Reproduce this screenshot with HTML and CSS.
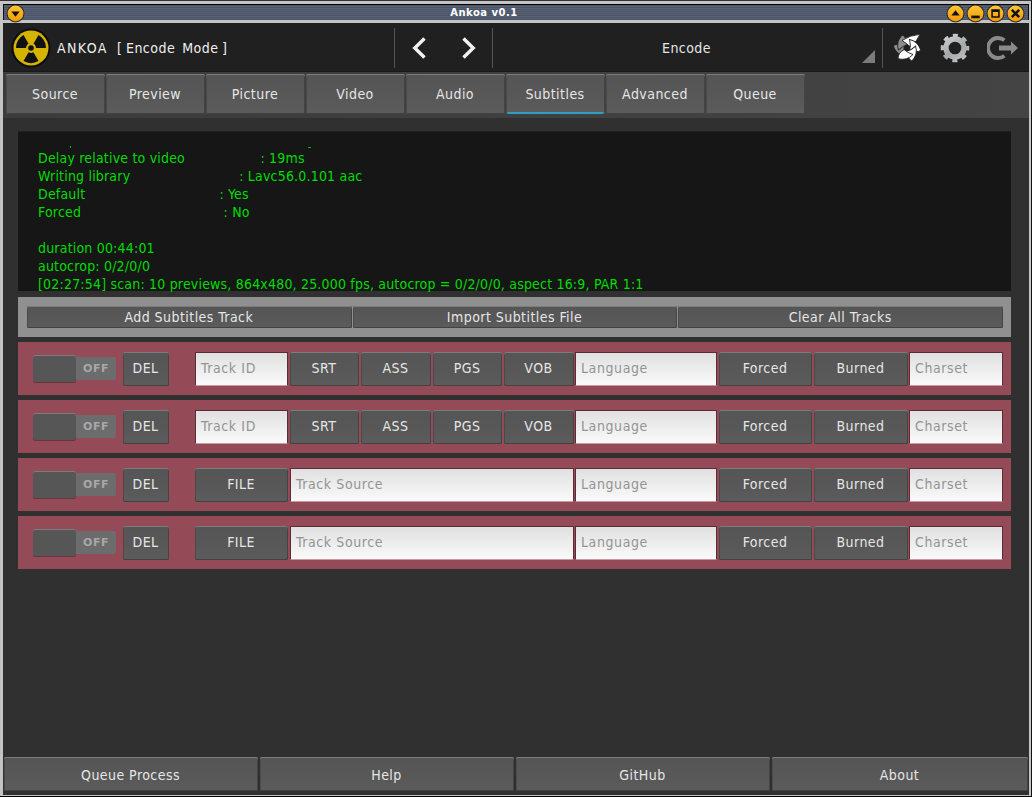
FILE: index.html
```html
<!DOCTYPE html>
<html lang="en">
<head>
<meta charset="utf-8">
<title>Ankoa v0.1</title>
<link rel="stylesheet" href="styles.css">
</head>
<body>
<div class="window">
  <div class="titlebar">
    <svg class="wbtn menu-btn" viewBox="0 0 18 18"><defs><linearGradient id="orb" x1="0" y1="0" x2="0" y2="1"><stop offset="0" stop-color="#ffc533"/><stop offset="1" stop-color="#ef9a08"/></linearGradient></defs><circle cx="9" cy="9" r="8.500" fill="#2a2a2a"/><circle cx="9" cy="9" r="7.500" fill="url(#orb)"/><path d="M5 7h8l-4 5z" fill="#111"/></svg>
    <span class="title">Ankoa v0.1</span>
    <div class="wbtns">
      <svg class="wbtn" viewBox="0 0 18 18"><circle cx="9" cy="9" r="8.500" fill="#2a2a2a"/><circle cx="9" cy="9" r="7.500" fill="url(#orb)"/><path d="M5 11h8L9 6z" fill="#111"/></svg>
      <svg class="wbtn" viewBox="0 0 18 18"><circle cx="9" cy="9" r="8.500" fill="#2a2a2a"/><circle cx="9" cy="9" r="7.500" fill="url(#orb)"/><path d="M5 11h8v2.500H5z" fill="#111"/></svg>
      <svg class="wbtn" viewBox="0 0 18 18"><circle cx="9" cy="9" r="8.500" fill="#2a2a2a"/><circle cx="9" cy="9" r="7.500" fill="url(#orb)"/><path d="M5 5h8v8H5zM6.500 7.500v4h5v-4z" fill="#111" fill-rule="evenodd"/></svg>
      <svg class="wbtn" viewBox="0 0 18 18"><circle cx="9" cy="9" r="8.500" fill="#2a2a2a"/><circle cx="9" cy="9" r="7.500" fill="url(#orb)"/><path d="M5.500 5.500l7 7M12.500 5.500l-7 7" stroke="#111" stroke-width="2.400"/></svg>
    </div>
  </div>
  <div class="app">
    <header class="header">
      <svg class="logo" viewBox="0 0 40 40">
        <circle cx="20" cy="20" r="19.500" fill="#0c0c0c"/>
        <circle cx="20" cy="20" r="17.500" fill="#d4b400"/>
        <path d="M20 20L27.500 33A15 15 0 0 1 12.500 33ZM20 20L5 20A15 15 0 0 1 12.500 7ZM20 20L27.500 7A15 15 0 0 1 35 20Z" fill="#111"/>
        <circle cx="20" cy="20" r="5" fill="#d4b400"/>
        <circle cx="20" cy="20" r="2.800" fill="#111"/>
      </svg>
      <span class="brand"><span class="brand-name">ANKOA</span>  <span class="brand-mode">[ Encode  Mode ]</span></span>
      <div class="nav">
        <svg class="chev" viewBox="0 0 16 24"><path d="M13.500 2.500L3.800 12l9.700 9.500" fill="none" stroke="#f2f2f2" stroke-width="3.400"/></svg>
        <svg class="chev" viewBox="0 0 16 24"><path d="M2.500 2.500L12.200 12l-9.700 9.500" fill="none" stroke="#f2f2f2" stroke-width="3.400"/></svg>
      </div>
      <div class="mode">
        <span>Encode</span>
        <svg class="corner" viewBox="0 0 13 13"><path d="M13 0v13H0z" fill="#7b7b7b"/></svg>
      </div>
      <div class="tools">
        <svg class="tool" viewBox="-16 -16 32 32">
          <defs><path id="blade" d="M-6 -6.500Q0 -13 9 -10.700Q9 -5 3 -1.500Q-1 -5 -6 -6.500Z" stroke="#202020" stroke-width="0.900"/></defs>
          <use href="#blade" fill="#8c8c8c" transform="rotate(240)"/>
          <use href="#blade" fill="#8c8c8c" transform="rotate(300)"/>
          <path d="M-5 -7.500Q3 -13 13 -13.700Q10 -6 3 -1.500Q-1 -5 -5 -7.500Z" fill="#fff" stroke="#202020" stroke-width="0.900"/>
          <use href="#blade" fill="#fff" transform="rotate(60)"/>
          <use href="#blade" fill="#fff" transform="rotate(120)"/>
          <use href="#blade" fill="#fff" transform="rotate(180)"/>
          <circle r="2.800" fill="#202020"/>
        </svg>
        <svg class="tool" viewBox="-16 -16 32 32">
          <defs><linearGradient id="gearfill" gradientUnits="userSpaceOnUse" x1="-8" y1="-14" x2="8" y2="14"><stop offset="0" stop-color="#d0d4d4"/><stop offset="0.55" stop-color="#a4a8a8"/><stop offset="1" stop-color="#c0c4c4"/></linearGradient></defs>
          <circle r="9" fill="none" stroke="url(#gearfill)" stroke-width="5.400"/>
          <circle r="12.500" fill="none" stroke="url(#gearfill)" stroke-width="3.600" stroke-dasharray="5 4.817" stroke-dashoffset="2.500"/>
        </svg>
        <svg class="tool" viewBox="-16 -16 32 32">
          <path d="M1.400 -7.700A10 10 0 1 0 1.400 7.700" fill="none" stroke="#8a8a8a" stroke-width="3.800"/>
          <path d="M-4 -2.400H8V-6.500L15 0 8 6.500V2.400H-4Z" fill="#8a8a8a"/>
        </svg>
      </div>
    </header>
    <nav class="tabs">
      <button class="btn tab">Source</button>
      <button class="btn tab">Preview</button>
      <button class="btn tab">Picture</button>
      <button class="btn tab">Video</button>
      <button class="btn tab">Audio</button>
      <button class="btn tab active">Subtitles</button>
      <button class="btn tab">Advanced</button>
      <button class="btn tab">Queue</button>
    </nav>
    <main class="content">
      <div class="log"><i class="tick tick-a"></i><i class="tick tick-b"></i><pre class="logtext">Delay relative to video                  : 19ms
Writing library                          : Lavc56.0.101 aac
Default                                : Yes
Forced                                  : No

duration 00:44:01
autocrop: 0/2/0/0
[02:27:54] scan: 10 previews, 864x480, 25.000 fps, autocrop = 0/2/0/0, aspect 16:9, PAR 1:1</pre></div>
      <div class="toolbar">
        <button class="btn tool-btn">Add Subtitles Track</button>
        <button class="btn tool-btn">Import Subtitles File</button>
        <button class="btn tool-btn">Clear All Tracks</button>
      </div>
      <div class="row">
        <div class="toggle"><span class="knob"></span><span class="off">OFF</span></div>
        <button class="btn del">DEL</button>
        <div class="field w-id">Track ID</div>
        <button class="btn fmt w1">SRT</button><button class="btn fmt w2">ASS</button><button class="btn fmt w1">PGS</button><button class="btn fmt w2">VOB</button>
        <div class="field w-lang">Language</div>
        <button class="btn fmt w-forced">Forced</button><button class="btn fmt w-burned">Burned</button>
        <div class="field w-char">Charset</div>
      </div>
      <div class="row">
        <div class="toggle"><span class="knob"></span><span class="off">OFF</span></div>
        <button class="btn del">DEL</button>
        <div class="field w-id">Track ID</div>
        <button class="btn fmt w1">SRT</button><button class="btn fmt w2">ASS</button><button class="btn fmt w1">PGS</button><button class="btn fmt w2">VOB</button>
        <div class="field w-lang">Language</div>
        <button class="btn fmt w-forced">Forced</button><button class="btn fmt w-burned">Burned</button>
        <div class="field w-char">Charset</div>
      </div>
      <div class="row">
        <div class="toggle"><span class="knob"></span><span class="off">OFF</span></div>
        <button class="btn del">DEL</button>
        <button class="btn file">FILE</button>
        <div class="field w-src">Track Source</div>
        <div class="field w-lang">Language</div>
        <button class="btn fmt w-forced">Forced</button><button class="btn fmt w-burned">Burned</button>
        <div class="field w-char">Charset</div>
      </div>
      <div class="row">
        <div class="toggle"><span class="knob"></span><span class="off">OFF</span></div>
        <button class="btn del">DEL</button>
        <button class="btn file">FILE</button>
        <div class="field w-src">Track Source</div>
        <div class="field w-lang">Language</div>
        <button class="btn fmt w-forced">Forced</button><button class="btn fmt w-burned">Burned</button>
        <div class="field w-char">Charset</div>
      </div>
    </main>
    <footer class="footer">
      <button class="btn foot">Queue Process</button>
      <button class="btn foot">Help</button>
      <button class="btn foot">GitHub</button>
      <button class="btn foot last">About</button>
    </footer>
  </div>
</div>
</body>
</html>
```
FILE: styles.css
```css
* { box-sizing: border-box; }
html, body { margin: 0; height: 100%; background: #000; overflow: hidden; }
body { font-family: "DejaVu Sans Condensed", "DejaVu Sans", sans-serif; font-size: 14px; letter-spacing: 0.45px; color: #e6e6e6; }

.window {
  width: 1032px; height: 797px;
  display: flex; flex-direction: column;
  background: #c4c4c4;
  border-top: 1px solid #333;
  border-right: 1px solid #111;
  border-bottom: 1px solid #000;
  padding: 2px 2px 1px 3px;
}
.titlebar {
  height: 16px; flex: none;
  margin: 1px 0 3px;
  display: flex; align-items: center; justify-content: center;
  position: relative;
  background: repeating-linear-gradient(180deg, #4b5467 0 1px, #5a6376 1px 2px);
  border-top: 1px solid #000;
  border-left: 1px solid #111;
  border-right: 1px solid #111;
}
.title {
  font-family: "DejaVu Sans", sans-serif;
  font-weight: 700; font-size: 10px; color: #fff;
  margin-right: 64px; letter-spacing: 0.5px;
}
.wbtn { width: 19px; height: 19px; flex: none; }
.menu-btn { position: absolute; left: 2px; top: -1px; }
.wbtns { position: absolute; right: 3px; top: -1px; display: flex; gap: 1px; }

.app {
  flex: 1; min-height: 0;
  display: flex; flex-direction: column;
  background: #303030;
}
.header {
  height: 49px; flex: none;
  display: flex; align-items: center;
  background: #202020;
  padding: 1px 0 0 8px;
  border-bottom: 1px solid #191919;
}
.logo { width: 40px; height: 40px; flex: none; }
.brand { white-space: pre; margin-left: 6px; width: 337px; flex: none; letter-spacing: 0.6px; color: #efefef; }
.brand-name { letter-spacing: 1.4px; }
.brand-mode { letter-spacing: 0.5px; word-spacing: -1px; }
.nav {
  width: 99px; height: 40px; flex: none;
  display: flex; align-items: center; justify-content: space-between;
  padding: 0 15px 0 16px;
  border-left: 1px solid #555;
  border-right: 1px solid #555;
}
.chev { width: 16px; height: 24px; }
.mode {
  flex: 1; height: 40px;
  display: flex; align-items: center; justify-content: center;
  position: relative;
  border-right: 1px solid #555;
  color: #e6e6e6;
  padding-right: 2px;
}
.corner { position: absolute; right: 7px; bottom: 5px; width: 13px; height: 13px; }
.tools {
  width: 146px; flex: none; height: 40px;
  display: flex; align-items: center; justify-content: space-between;
  padding: 0 10px 0 8px;
}
.tool { width: 32px; height: 32px; }

.btn {
  appearance: none;
  font: inherit; letter-spacing: inherit; color: #e6e6e6;
  background: linear-gradient(180deg, #555 0%, #585858 60%, #5c5c5c 100%);
  border: 0; border-radius: 2px;
  padding: 0 1px 0 0;
  box-shadow: inset 0 1px 0 #7c7c7c, inset 1px 0 0 #4a4a4a, inset -1px 0 0 #444, inset 0 -1px 0 #424242;
}
.tabs {
  height: 46px; flex: none;
  display: flex; gap: 1px;
  padding: 2px 0 4px 3px;
  background: linear-gradient(90deg, #3b3b3b, #444);
}
.tab { width: 99px; }
.tab.active { box-shadow: inset 0 1px 0 #7c7c7c, inset 1px 0 0 #4a4a4a, inset -1px 0 0 #444, inset 0 -2px 0 #2f9fc4; }

.content {
  flex: 1; min-height: 0;
  display: flex; flex-direction: column;
  padding: 13px 18px 0 15px;
}
.log {
  height: 160px; flex: none;
  position: relative;
  background: #161616;
  border-top: 1px solid #202020;
  padding: 17px 0 0 20px;
  margin-bottom: 6px;
}
.logtext {
  margin: 0;
  font-family: inherit; font-size: 14px; line-height: 18px; letter-spacing: 0.19px;
  color: #00dc00;
}
.tick { position: absolute; background: #00c000; }
.tick-a { left: 52px; top: 14px; width: 1px; height: 2px; }
.tick-b { left: 290px; top: 15px; width: 3px; height: 1px; }

.toolbar {
  height: 40px; flex: none;
  display: flex; align-items: center; gap: 1px;
  background: #909090;
  padding: 0 8px 0 9px;
  margin-bottom: 5px;
}
.tool-btn { flex: 1; height: 22px; }

.row {
  height: 53px; flex: none;
  display: flex; align-items: center;
  gap: 2px;
  background: #954a58;
  padding: 0 9px 0 15px;
  margin-bottom: 5px;
}
.toggle { width: 83px; height: 27px; flex: none; display: flex; align-items: center; margin-right: 5px; }
.knob {
  width: 43px; height: 27px; background: #565656; border-radius: 2px;
  box-shadow: inset 0 1px 0 #7c7c7c, 0 1px 0 #6a3540;
}
.off {
  flex: 1; height: 23px;
  display: flex; align-items: center; justify-content: center;
  background: #6c6c6c;
  border-radius: 0 2px 2px 0;
  color: #a8a8a8;
  font-family: "DejaVu Sans", sans-serif;
  font-size: 11px; font-weight: 700; letter-spacing: 0.5px;
}
.del { width: 46px; height: 34px; margin-right: 24px; flex: none; padding-bottom: 1px; }
.fmt, .file { height: 34px; flex: none; padding-bottom: 1px; }
.w1 { width: 69px; }
.w2 { width: 70px; }
.w-forced { width: 93px; }
.w-burned { width: 94px; }
.file { width: 93px; }
.field {
  height: 34px; flex: none;
  display: flex; align-items: center;
  padding: 0 0 2px 5px;
  background: linear-gradient(180deg, #e0e0e0, #fafafa);
  border: 1px solid #5a2c36;
  border-bottom-color: #c89aa2;
  color: #949494;
  letter-spacing: 0.6px;
}
.w-id { width: 93px; }
.w-lang { width: 142px; margin-left: -1px; }
.w-src { width: 284px; }
.w-char { width: 94px; margin-left: -1px; }

.footer {
  margin-top: auto;
  height: 38px; flex: none;
  display: flex; gap: 2px;
  padding: 0 0 2px 1px;
}
.foot { width: 254px; height: 34px; padding-top: 1px; }
.foot.last { width: 256px; }
```
